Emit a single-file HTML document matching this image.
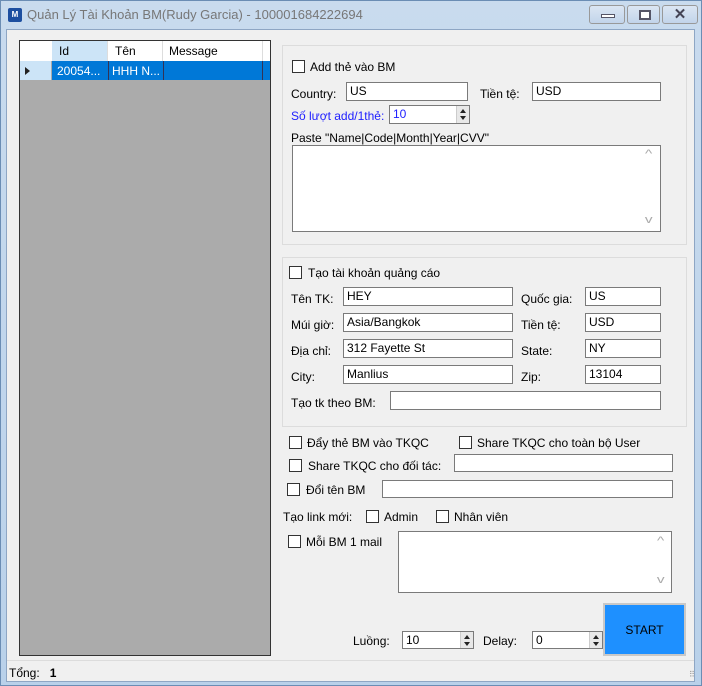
<!DOCTYPE html>
<html><head><meta charset="utf-8"><style>
*{box-sizing:border-box;margin:0;padding:0}
body{width:702px;height:686px;overflow:hidden;background:#fff;font-family:"Liberation Sans",Arial,sans-serif;font-size:12px;color:#000;position:relative}
.a{position:absolute}
.win{left:0;top:0;width:702px;height:686px;background:linear-gradient(#c9dbee,#b9d1ea);border:1px solid #6b8db4}
.client{left:6px;top:29px;width:689px;height:653px;background:#f0f0f0;border:1px solid #8ea6c4}
.tb{background:#fff;border:1px solid #7a7a7a;height:19px;padding:1px 3px;font-size:12px;line-height:15px}
.cb{width:13px;height:13px;border:1px solid #333;background:#fff}
.grp{border:1px solid #dcdcdc;background:#f0f0f0}
.lbl{white-space:nowrap;line-height:14px}
.spin{width:13px;height:17px;border-left:1px solid #ccc;background:#e8e8e8}
.spin:before{content:"";position:absolute;left:3px;top:3px;border:3px solid transparent;border-bottom:4px solid #222;border-top:0}
.spin:after{content:"";position:absolute;left:3px;top:10px;border:3px solid transparent;border-top:4px solid #222;border-bottom:0}
.sb{color:#aaa;font-size:11px;transform:scaleX(1.4)}
.btn{border:1px solid #999;border-radius:3px;background:linear-gradient(#dbe6f3,#c2d4ea)}
</style></head><body>
<div class="a win"></div>
<div class="a" style="left:8px;top:8px;width:14px;height:14px;background:#1d4fa0;border-radius:2px;color:#fff;font-size:8px;line-height:14px;text-align:center;font-weight:bold">M</div>
<div class="a lbl" style="left:27px;top:8px;font-size:13px;color:#777">Quản Lý Tài Khoản BM(Rudy Garcia) - 100001684222694</div>
<div class="a btn" style="left:589px;top:5px;width:36px;height:19px"><div class="a" style="left:11px;top:8px;width:14px;height:4px;background:#fff;border:1px solid #556"></div></div>
<div class="a btn" style="left:627px;top:5px;width:33px;height:19px"><div class="a" style="left:11px;top:4px;width:12px;height:10px;background:#fff;border:2px solid #556"></div></div>
<div class="a btn" style="left:662px;top:5px;width:36px;height:19px;text-align:center;font-weight:bold;font-size:15px;line-height:18px;color:#445">✕</div>
<div class="a client"></div>

<!-- grid -->
<div class="a" style="left:19px;top:40px;width:252px;height:616px;background:#ababab;border:1px solid #333"></div>
<div class="a" style="left:20px;top:41px;width:250px;height:20px;background:#fff"></div>
<div class="a" style="left:52px;top:41px;width:56px;height:20px;background:#cce4f7;border-right:1px solid #ddd"></div>
<div class="a" style="left:108px;top:41px;width:55px;height:20px;border-right:1px solid #ddd"></div>
<div class="a" style="left:163px;top:41px;width:100px;height:20px;border-right:1px solid #ddd"></div>
<div class="a lbl" style="left:59px;top:44px">Id</div>
<div class="a lbl" style="left:115px;top:44px">Tên</div>
<div class="a lbl" style="left:169px;top:44px">Message</div>
<div class="a" style="left:20px;top:61px;width:32px;height:19px;background:#cce4f7;border-right:1px solid #aaa"></div>
<div class="a" style="left:25px;top:67px;border:4px solid transparent;border-left:5px solid #222;border-right:0"></div>
<div class="a" style="left:52px;top:61px;width:211px;height:19px;background:#0078d7"></div>
<div class="a" style="left:263px;top:61px;width:7px;height:19px;background:#0078d7"></div>
<div class="a" style="left:108px;top:61px;width:1px;height:19px;background:#335"></div>
<div class="a" style="left:163px;top:61px;width:1px;height:19px;background:#335"></div>
<div class="a" style="left:262px;top:61px;width:1px;height:19px;background:#335"></div>
<div class="a lbl" style="left:57px;top:64px;color:#fff">20054...</div>
<div class="a lbl" style="left:112px;top:64px;color:#fff">HHH N...</div>

<!-- group 1 -->
<div class="a grp" style="left:282px;top:45px;width:405px;height:200px"></div>
<div class="a cb" style="left:292px;top:60px"></div>
<div class="a lbl" style="left:310px;top:60px">Add thẻ vào BM</div>
<div class="a lbl" style="left:291px;top:87px">Country:</div>
<div class="a tb" style="left:346px;top:82px;width:122px">US</div>
<div class="a lbl" style="left:480px;top:87px">Tiền tệ:</div>
<div class="a tb" style="left:532px;top:82px;width:129px">USD</div>
<div class="a lbl" style="left:291px;top:109px;color:#2020ff">Số lượt add/1thẻ:</div>
<div class="a tb" style="left:389px;top:105px;width:81px;height:19px;color:#2020ff">10</div>
<div class="a spin" style="left:456px;top:106px"></div>
<div class="a lbl" style="left:291px;top:131px">Paste "Name|Code|Month|Year|CVV"</div>
<div class="a tb" style="left:292px;top:145px;width:369px;height:87px"></div>
<div class="a sb" style="left:646px;top:148px">^</div>
<div class="a sb" style="left:646px;top:214px">v</div>

<!-- group 2 -->
<div class="a grp" style="left:282px;top:257px;width:405px;height:170px"></div>
<div class="a cb" style="left:289px;top:266px"></div>
<div class="a lbl" style="left:308px;top:266px">Tạo tài khoản quảng cáo</div>
<div class="a lbl" style="left:291px;top:292px">Tên TK:</div>
<div class="a tb" style="left:343px;top:287px;width:170px">HEY</div>
<div class="a lbl" style="left:521px;top:292px">Quốc gia:</div>
<div class="a tb" style="left:585px;top:287px;width:76px">US</div>
<div class="a lbl" style="left:291px;top:318px">Múi giờ:</div>
<div class="a tb" style="left:343px;top:313px;width:170px">Asia/Bangkok</div>
<div class="a lbl" style="left:521px;top:318px">Tiền tệ:</div>
<div class="a tb" style="left:585px;top:313px;width:76px">USD</div>
<div class="a lbl" style="left:291px;top:344px">Địa chỉ:</div>
<div class="a tb" style="left:343px;top:339px;width:170px">312 Fayette St</div>
<div class="a lbl" style="left:521px;top:344px">State:</div>
<div class="a tb" style="left:585px;top:339px;width:76px">NY</div>
<div class="a lbl" style="left:291px;top:370px">City:</div>
<div class="a tb" style="left:343px;top:365px;width:170px">Manlius</div>
<div class="a lbl" style="left:521px;top:370px">Zip:</div>
<div class="a tb" style="left:585px;top:365px;width:76px">13104</div>
<div class="a lbl" style="left:291px;top:396px">Tạo tk theo BM:</div>
<div class="a tb" style="left:390px;top:391px;width:271px"></div>

<!-- lower -->
<div class="a cb" style="left:289px;top:436px"></div>
<div class="a lbl" style="left:307px;top:436px">Đẩy thẻ BM vào TKQC</div>
<div class="a cb" style="left:459px;top:436px"></div>
<div class="a lbl" style="left:477px;top:436px">Share TKQC cho toàn bộ User</div>
<div class="a cb" style="left:289px;top:459px"></div>
<div class="a lbl" style="left:308px;top:459px">Share TKQC cho đối tác:</div>
<div class="a tb" style="left:454px;top:454px;width:219px;height:18px"></div>
<div class="a cb" style="left:287px;top:483px"></div>
<div class="a lbl" style="left:306px;top:483px">Đổi tên BM</div>
<div class="a tb" style="left:382px;top:480px;width:291px;height:18px"></div>
<div class="a lbl" style="left:283px;top:510px">Tạo link mới:</div>
<div class="a cb" style="left:366px;top:510px"></div>
<div class="a lbl" style="left:384px;top:510px">Admin</div>
<div class="a cb" style="left:436px;top:510px"></div>
<div class="a lbl" style="left:454px;top:510px">Nhân viên</div>
<div class="a cb" style="left:288px;top:535px"></div>
<div class="a lbl" style="left:306px;top:535px">Mỗi BM 1 mail</div>
<div class="a tb" style="left:398px;top:531px;width:274px;height:62px"></div>
<div class="a sb" style="left:658px;top:535px">^</div>
<div class="a sb" style="left:658px;top:574px">v</div>

<div class="a lbl" style="left:353px;top:634px">Luồng:</div>
<div class="a tb" style="left:402px;top:631px;width:72px;height:18px">10</div>
<div class="a spin" style="left:460px;top:632px;height:16px"></div>
<div class="a lbl" style="left:483px;top:634px">Delay:</div>
<div class="a tb" style="left:532px;top:631px;width:71px;height:18px">0</div>
<div class="a spin" style="left:589px;top:632px;height:16px"></div>
<div class="a" style="left:603px;top:603px;width:83px;height:53px;border:2px solid #c8c8c8;background:#1e90ff"></div>
<div class="a lbl" style="left:603px;top:623px;width:83px;text-align:center">START</div>

<div class="a" style="left:7px;top:660px;width:687px;height:1px;background:#dcdcdc"></div>
<div class="a lbl" style="left:9px;top:666px">Tổng:&nbsp;&nbsp; <b>1</b></div>
<div class="a lbl" style="left:689px;top:668px;color:#999;font-size:8px">⠿</div>
</body></html>
